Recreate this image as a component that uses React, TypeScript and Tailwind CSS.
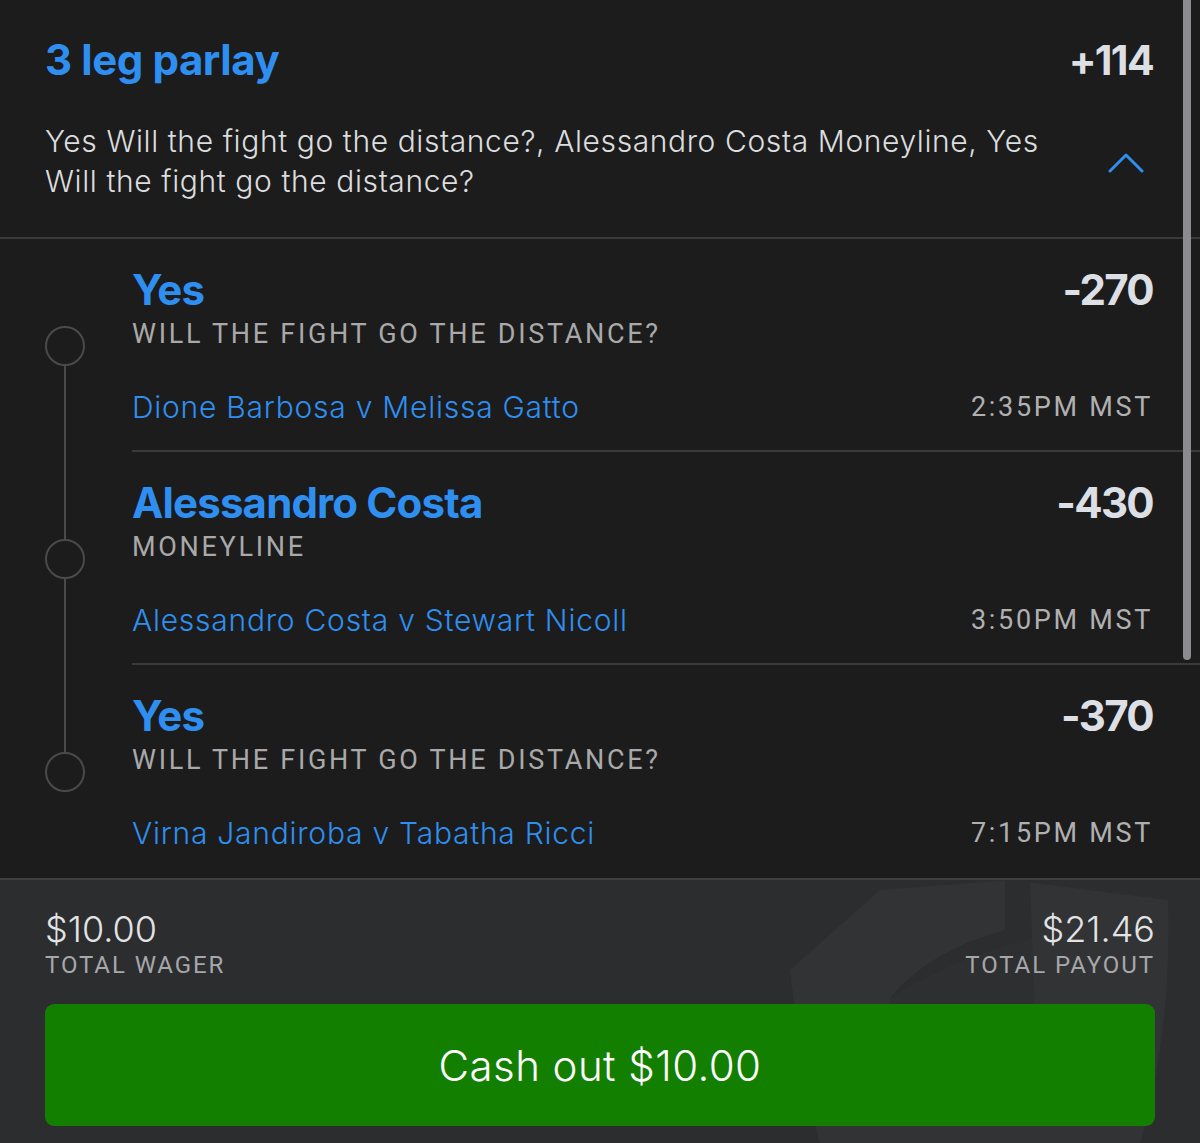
import React from "react";

const legs = [
  {
    pick: "Yes",
    market: "Will the fight go the distance?",
    matchup: "Dione Barbosa v Melissa Gatto",
    odds: "-270",
    time: "2:35PM MST",
  },
  {
    pick: "Alessandro Costa",
    market: "Moneyline",
    matchup: "Alessandro Costa v Stewart Nicoll",
    odds: "-430",
    time: "3:50PM MST",
  },
  {
    pick: "Yes",
    market: "Will the fight go the distance?",
    matchup: "Virna Jandiroba v Tabatha Ricci",
    odds: "-370",
    time: "7:15PM MST",
  },
];

const sans = "font-['Inter','Lato',sans-serif]";
const narrow = "font-['Roboto','Liberation_Sans',sans-serif]";

export default function App() {
  return (
    <div className={`relative flex h-[1143px] w-[1200px] flex-col overflow-hidden bg-[#1c1c1d] ${sans}`}>
      <header className="flex h-[239px] shrink-0 flex-col border-b-2 border-[#3a3a3b] pl-[45px] pr-[47px] pt-[34px]">
        <div className="flex items-start justify-between">
          <h1 className="text-[42px] font-bold leading-[52px] tracking-[-0.01em] text-[#2f8ff0]">3 leg parlay</h1>
          <span className="text-[41px] font-bold leading-[52px] tracking-[-0.04em] text-[#dcdfe4]">+114</span>
        </div>
        <div className="mt-[35px] flex items-center justify-between">
          <p className="w-[1012px] text-[30px] font-light leading-[40px] tracking-[0.02em] text-[#dcdddf]">
            Yes Will the fight go the distance?, Alessandro Costa Moneyline, Yes Will the fight go the distance?
          </p>
          <svg width="36" height="20" viewBox="0 0 36 20" className="mr-[9px] mt-[4px]">
            <polyline points="2,18 18,2 34,18" fill="none" stroke="#2f8ff0" strokeWidth="3" strokeLinecap="round" strokeLinejoin="round" />
          </svg>
        </div>
      </header>

      <div className="flex flex-col">
        {legs.map((leg, i) => (
          <Leg key={i} {...leg} first={i === 0} last={i === legs.length - 1} />
        ))}
      </div>

      <footer className="relative flex flex-1 flex-col border-t-2 border-[#3e3f41] bg-[#2c2d2f] px-[45px] pt-[28px]">
        <Watermark />
        <div className="relative flex items-start justify-between">
          <div>
            <p className="text-[36px] font-light leading-[42px] text-[#e2e3e5]">$10.00</p>
            <p className={`${narrow} text-[24px] leading-[30px] tracking-[0.08em] text-[#a6a7a9]`}>TOTAL WAGER</p>
          </div>
          <div className="text-right">
            <p className="text-[36px] font-light leading-[42px] text-[#e2e3e5]">$21.46</p>
            <p className={`${narrow} text-[24px] leading-[30px] tracking-[0.08em] text-[#a6a7a9]`}>TOTAL PAYOUT</p>
          </div>
        </div>
        <button className="relative mt-[24px] flex h-[122px] w-full items-center justify-center rounded-[9px] bg-[#137f00] text-[42px] font-light tracking-[0.01em] text-white">
          Cash out $10.00
        </button>
      </footer>

      {/* scrollbar */}
      <div className="absolute right-[9px] top-0 h-[660px] w-[8px] rounded-b-full bg-[#8c8c8e]" />
    </div>
  );
}

function Leg({
  pick,
  market,
  matchup,
  odds,
  time,
  first,
  last,
}: {
  pick: string;
  market: string;
  matchup: string;
  odds: string;
  time: string;
  first: boolean;
  last: boolean;
}) {
  return (
    <div className="flex h-[213px]">
      <div className="flex w-[132px] shrink-0 flex-col items-center pr-[2px]">
        <div className={`h-[87px] w-[2px] ${first ? "" : "bg-[#4a4a4b]"}`} />
        <div className="h-[40px] w-[40px] rounded-full border-2 border-[#4a4a4b]" />
        <div className={`w-[2px] flex-1 ${last ? "" : "bg-[#4a4a4b]"}`} />
      </div>
      <div className={`flex flex-1 flex-col pr-[47px] pt-[27px] ${last ? "" : "border-b-2 border-[#3a3a3b]"}`}>
        <div className="flex items-start justify-between">
          <span className="text-[42px] font-bold leading-[48px] tracking-[-0.02em] text-[#2f8ff0]">{pick}</span>
          <span className="text-[42px] font-bold leading-[48px] tracking-[-0.04em] text-[#dcdfe4]">{odds}</span>
        </div>
        <p className={`${narrow} mt-[2px] text-[27px] uppercase leading-[36px] tracking-[0.1em] text-[#a9a9aa]`}>{market}</p>
        <div className="mt-[35px] flex items-center justify-between">
          <span className="text-[30px] font-light leading-[40px] tracking-[0.025em] text-[#2f8ff0]">{matchup}</span>
          <span className={`${narrow} text-[27px] leading-[40px] tracking-[0.1em] text-[#b0b0b1]`}>{time}</span>
        </div>
      </div>
    </div>
  );
}

function Watermark() {
  return (
    <svg className="absolute left-[780px] top-0" width="420" height="265" viewBox="0 0 420 265">
      <path
        d="M10 90 L100 10 L230 0 L388 20 Q392 150 360 265 L40 265 Q20 180 10 90 Z"
        fill="#323335"
      />
      <path d="M225 0 L250 0 L252 58 Q170 80 110 118 Q150 70 225 50 Z" fill="#2c2d2f" />
      <path d="M110 118 Q170 80 252 58 L255 140 Q180 150 120 200 Z" fill="#2e2f31" />
    </svg>
  );
}
